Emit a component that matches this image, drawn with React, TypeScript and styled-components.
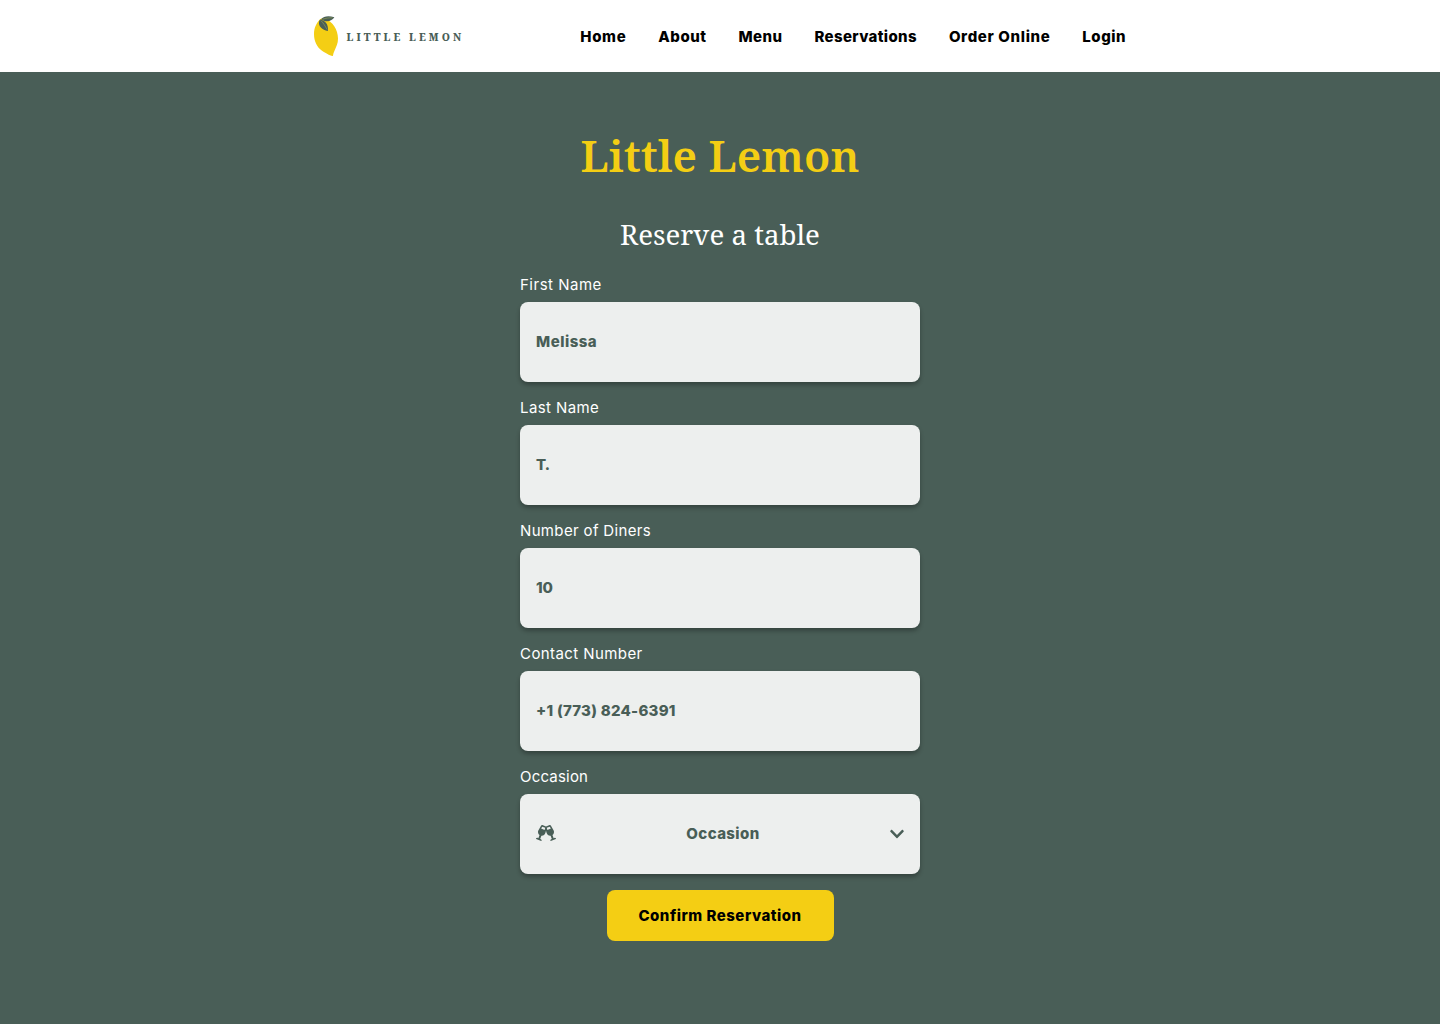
import React from "react";
import styled, { createGlobalStyle } from "styled-components";
import { FaChevronDown, FaGlassCheers } from "react-icons/fa";

const green = "#495e57";
const yellow = "#f4ce14";
const sans = `Inter, "Liberation Sans", sans-serif`;
const serif = `"Noto Serif", "DejaVu Serif", serif`;

const GlobalStyle = createGlobalStyle`
  *, *::before, *::after { box-sizing: border-box; }
  body { margin: 0; background: ${green}; font-family: ${sans}; }
`;

const Page = styled.div`
  min-height: 1024px;
  background: ${green};
`;

const Header = styled.header`
  display: flex;
  justify-content: center;
  height: 72px;
  background: #fff;
`;

const HeaderInner = styled.div`
  display: flex;
  align-items: center;
  justify-content: space-between;
  width: 812px;
`;

const Logo = styled.a`
  display: flex;
  align-items: center;
  gap: 8.5px;
  color: ${green};
`;

const LogoText = styled.span`
  padding-top: 2px;
  font: 800 10.2px/14px ${serif};
  letter-spacing: 3.1px;
  white-space: nowrap;
`;

const Nav = styled.nav`
  display: flex;
  gap: 32px;
  padding-top: 2px;
`;

const NavLink = styled.a<{ $tracking: number }>`
  color: #000;
  font: 800 15px/20px ${sans};
  letter-spacing: ${(p) => p.$tracking}px;
  white-space: nowrap;
`;

const Main = styled.main`
  display: flex;
  flex-direction: column;
  align-items: center;
  padding-top: 53px;
`;

const Title = styled.h1`
  margin: 0;
  color: ${yellow};
  font: 600 44px/60px ${serif};
`;

const Subtitle = styled.h2`
  margin: 29px 0 0;
  color: #fff;
  font: 450 27.7px/40px ${serif};
`;

const Form = styled.form`
  display: flex;
  flex-direction: column;
  align-items: center;
  gap: 16px;
  width: 400px;
  margin-top: 21px;
`;

const Field = styled.div`
  display: flex;
  flex-direction: column;
  gap: 7px;
  width: 100%;
`;

const Label = styled.label<{ $tracking: number }>`
  color: #fff;
  font: 400 15px/20px ${sans};
  letter-spacing: ${(p) => p.$tracking}px;
`;

const Control = styled.div`
  display: flex;
  align-items: center;
  justify-content: space-between;
  height: 80px;
  padding: 0 16px;
  border-radius: 8px;
  background: #edefee;
  color: ${green};
  box-shadow: 0 3px 4px rgba(0, 0, 0, 0.28);
`;

const Value = styled.span<{ $tracking: number }>`
  font: 800 15px/20px ${sans};
  letter-spacing: ${(p) => p.$tracking}px;
`;

const Cheers = styled(FaGlassCheers)`
  width: 20px;
  height: 20px;
  margin-top: -2px;
`;

const Chevron = styled(FaChevronDown)`
  width: 16px;
  height: 16px;
  margin: 0 -1px 0 -1px;
`;

const Submit = styled.button`
  width: 227px;
  height: 51px;
  padding: 0;
  border: 0;
  border-radius: 8px;
  background: ${yellow};
  color: #000;
  font: 800 15px/20px ${sans};
  letter-spacing: 0.5px;
`;

const links = [
  { text: "Home", tracking: 0.65 },
  { text: "About", tracking: 0.5 },
  { text: "Menu", tracking: 0.45 },
  { text: "Reservations", tracking: 0.35 },
  { text: "Order Online", tracking: 0.64 },
  { text: "Login", tracking: 0.5 },
];

const fields = [
  { label: "First Name", labelTracking: 0.5, value: "Melissa", tracking: 0.5 },
  { label: "Last Name", labelTracking: 0.4, value: "T.", tracking: -0.8 },
  { label: "Number of Diners", labelTracking: 0.35, value: "10", tracking: 0 },
  { label: "Contact Number", labelTracking: 0.42, value: "+1 (773) 824-6391", tracking: 0.25 },
];

function Lemon() {
  return (
    <svg width="24" height="40" viewBox="0 0 24 40" aria-hidden="true">
      <path
        fill={yellow}
        d="M6 3.200C2.500 7 0 11.500 0 18c0 7.500 3 13 8 16.800 2 1.600 3.800 2.200 5.500 3.300 1.500 1 3.300 1.900 5.400 1.900.2-1.900.8-3.600 1.700-5.600C22.400 30.500 24 27.500 24 22.500 24 13.500 18.500 5.500 11 2.700 9.500 2.200 7.500 2.200 6 3.200Z"
      />
      <path fill={green} d="M7 3.400C9.500.4 14-.6 20.400 1.300 18.800 4.300 14.500 6 10.500 4.900 9.300 4.500 8.200 4.100 7 3.400Z" />
      <path fill={green} d="M6.200 3.600C11 4.300 14.700 8.500 13.900 15 8.200 14 3.900 10 5.100 5.600c.2-.8.500-1.400 1.100-2Z" />
      <path fill="none" stroke="#9aa553" strokeWidth=".6" d="M6.800 4.500c2.500 2.500 4.500 5.500 6.200 9M8.500 3.300c3.200-1.200 6.500-1.600 10-1.500" />
    </svg>
  );
}

export default function App() {
  return (
    <Page>
      <GlobalStyle />
      <Header>
        <HeaderInner>
          <Logo>
            <Lemon />
            <LogoText>LITTLE LEMON</LogoText>
          </Logo>
          <Nav>
            {links.map((link) => (
              <NavLink key={link.text} $tracking={link.tracking}>
                {link.text}
              </NavLink>
            ))}
          </Nav>
        </HeaderInner>
      </Header>
      <Main>
        <Title>Little Lemon</Title>
        <Subtitle>Reserve a table</Subtitle>
        <Form>
          {fields.map((field) => (
            <Field key={field.label}>
              <Label $tracking={field.labelTracking}>{field.label}</Label>
              <Control>
                <Value $tracking={field.tracking}>{field.value}</Value>
              </Control>
            </Field>
          ))}
          <Field>
            <Label $tracking={0.2}>Occasion</Label>
            <Control>
              <Cheers />
              <Value $tracking={0.4}>Occasion</Value>
              <Chevron />
            </Control>
          </Field>
          <Submit type="button">Confirm Reservation</Submit>
        </Form>
      </Main>
    </Page>
  );
}
